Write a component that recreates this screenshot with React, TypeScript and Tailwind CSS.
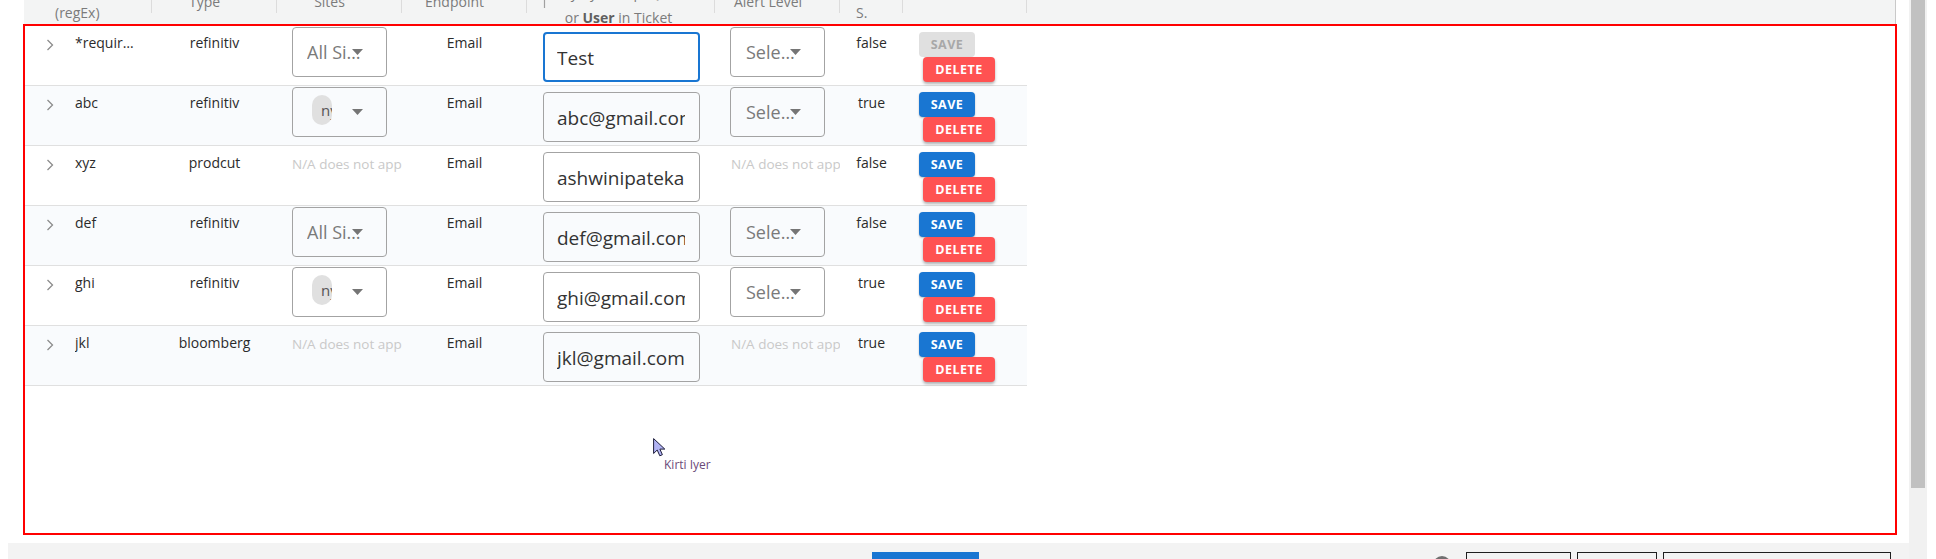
import React from 'react'

type Sites = 'all' | 'chip' | 'na'

type Rule = {
  name: string
  type: string
  sites: Sites
  ticket: string
  alert: boolean
  status: string
  editing?: boolean
}

const rules: Rule[] = [
  { name: '*required field', type: 'refinitiv', sites: 'all', ticket: 'Test', alert: true, status: 'false', editing: true },
  { name: 'abc', type: 'refinitiv', sites: 'chip', ticket: 'abc@gmail.com', alert: true, status: 'true' },
  { name: 'xyz', type: 'prodcut', sites: 'na', ticket: 'ashwinipatekar@lseg.com', alert: false, status: 'false' },
  { name: 'def', type: 'refinitiv', sites: 'all', ticket: 'def@gmail.com', alert: true, status: 'false' },
  { name: 'ghi', type: 'refinitiv', sites: 'chip', ticket: 'ghi@gmail.com', alert: true, status: 'true' },
  { name: 'jkl', type: 'bloomberg', sites: 'na', ticket: 'jkl@gmail.com', alert: false, status: 'true' },
]

function Chevron() {
  return (
    <svg width="8" height="12" viewBox="0 0 8 12" fill="none">
      <path d="M1.5 1 L6.5 6 L1.5 11" stroke="#8c8c8c" strokeWidth="1.3" />
    </svg>
  )
}

function SelectBox({ children }: { children: React.ReactNode }) {
  return (
    <div className="relative h-[50px] w-[95px] rounded-[4px] border border-[#a3a3a3]">
      {children}
      {/* dropdown caret */}
      <svg className="absolute left-[59px] top-[21px]" width="11" height="6" viewBox="0 0 11 6">
        <path d="M0 0 H11 L5.5 6 Z" fill="#757575" />
      </svg>
    </div>
  )
}

function NotApplicable() {
  return (
    <div className="overflow-hidden whitespace-nowrap pt-[7px] text-[13.5px] leading-[20px] text-[#c9c9c9]">
      N/A does not apply
    </div>
  )
}

function RuleRow({ rule, index }: { rule: Rule; index: number }) {
  return (
    <div className={`flex h-[60px] border-b border-[#e0e0e0] text-[14px] leading-[20px] text-[#2b2b2b] ${index % 2 ? 'bg-[#f9fbfd]' : 'bg-white'}`}>
      {/* expand + name */}
      <div className="flex w-[128px] shrink-0 items-start pt-[7px]">
        <div className="ml-[22px] mt-[6px]">
          <Chevron />
        </div>
        <span className="ml-[21px] block w-[60px] truncate">{rule.name}</span>
      </div>

      <div className="w-[125px] shrink-0 pt-[7px] text-center">{rule.type}</div>

      {/* sites */}
      <div className="w-[125px] shrink-0 overflow-hidden pl-[15px] pt-[1px]">
        {rule.sites === 'all' && (
          <SelectBox>
            <div className="flex h-full items-center pl-[14px]">
              <span className="block w-[56px] truncate text-[18px] leading-[24px] text-[#7a7a7a]">All Sites</span>
            </div>
          </SelectBox>
        )}
        {rule.sites === 'chip' && (
          <SelectBox>
            <div className="pl-[19px] pt-[7px]">
              <div className="h-[30px] w-[20px] overflow-hidden whitespace-nowrap rounded-full bg-[#e0e0e0] pl-[9px] text-[15px] leading-[30px] text-[#555]">
                ny
              </div>
            </div>
          </SelectBox>
        )}
        {rule.sites === 'na' && <NotApplicable />}
      </div>

      <div className="w-[125px] shrink-0 pt-[7px] text-center">Email</div>

      {/* ticket user */}
      <div className="w-[188px] shrink-0 pl-[16px] pt-[6px]">
        <div
          className={`flex h-[50px] w-[157px] items-center rounded-[4px] ${
            rule.editing ? 'border-2 border-[#1976d2] pl-[12px] pr-[13px]' : 'border border-[#a3a3a3] pl-[13px] pr-[14px]'
          }`}
        >
          <div className="min-w-0 flex-1 overflow-hidden whitespace-nowrap pt-[3px] text-[19px] leading-[25px] text-[#333]">
            {rule.ticket}
          </div>
        </div>
      </div>

      {/* alert level */}
      <div className="w-[125px] shrink-0 overflow-hidden pl-[15px] pt-[1px]">
        {rule.alert ? (
          <SelectBox>
            <div className="flex h-full items-center pl-[15px]">
              <span className="block w-[50px] truncate text-[18px] leading-[24px] text-[#7a7a7a]">Select Alert Level</span>
            </div>
          </SelectBox>
        ) : (
          <div className="pl-[1px]">
            <NotApplicable />
          </div>
        )}
      </div>

      <div className="w-[63px] shrink-0 pt-[7px] text-center">{rule.status}</div>

      {/* actions */}
      <div className="flex w-[124px] shrink-0 flex-col items-start pl-[16px] pt-[6px] text-[12.5px] font-bold leading-[25px] tracking-[0.04em]">
        {rule.editing ? (
          <button className="h-[25px] w-[56px] rounded-[4px] bg-[#e0e0e0] text-[#a8a8a8]">SAVE</button>
        ) : (
          <button className="h-[25px] w-[56px] rounded-[4px] bg-[#1976d2] text-white shadow-[0_1px_2px_rgba(0,0,0,0.25)]">SAVE</button>
        )}
        <button className="ml-[4px] h-[25px] w-[72px] rounded-[4px] bg-[#ff5252] text-white shadow-[0_2px_3px_rgba(0,0,0,0.3)]">
          DELETE
        </button>
      </div>
    </div>
  )
}

function Divider() {
  return <div className="h-[13px] w-px shrink-0 bg-[#dcdcdc]" />
}

function HeaderRow() {
  return (
    <div className="flex h-[26px] w-[1872px] overflow-hidden border-r border-[#c9c9c9] bg-[#f3f4f4] text-[14px] leading-[20px] text-[#7b7b7b]">
      <div className="flex w-[128px] shrink-0">
        <div className="-mt-[17px] min-w-0 flex-1 pl-[31px]">
          <div>&nbsp;</div>
          <div>(regEx)</div>
        </div>
        <Divider />
      </div>
      <div className="flex w-[125px] shrink-0">
        <div className="-mt-[8px] min-w-0 flex-1 pr-[19px] text-center">Type</div>
        <Divider />
      </div>
      <div className="flex w-[125px] shrink-0">
        <div className="-mt-[8px] min-w-0 flex-1 pr-[19px] text-center">Sites</div>
        <Divider />
      </div>
      <div className="flex w-[125px] shrink-0">
        <div className="-mt-[8px] min-w-0 flex-1 pr-[19px] text-center">Endpoint</div>
        <Divider />
      </div>
      <div className="flex w-[188px] shrink-0">
        <div className="-mt-[17px] min-w-0 flex-1 whitespace-nowrap pr-[4px] text-center">
          <div className="flex items-start justify-center gap-[5px]">
            <svg className="mt-[7px]" width="9" height="18" viewBox="0 0 9 18" fill="none">
              <path d="M4.5 18 V2 M0.8 5.5 L4.5 1.8 L8.2 5.5" stroke="#a0a0a0" strokeWidth="1.2" />
            </svg>
            <span>Key by Group, Queue,</span>
          </div>
          <div>
            or <b className="font-bold text-[#5f5f5f]">User</b> in Ticket
          </div>
        </div>
        <Divider />
      </div>
      <div className="flex w-[125px] shrink-0">
        <div className="-mt-[8px] min-w-0 flex-1 pr-[18px] text-center">Alert Level</div>
        <Divider />
      </div>
      <div className="flex w-[63px] shrink-0">
        <div className="-mt-[17px] min-w-0 flex-1 pl-[16px]">
          <div>&nbsp;</div>
          <div>S.</div>
        </div>
        <Divider />
      </div>
      <div className="flex w-[124px] shrink-0">
        <div className="min-w-0 flex-1" />
        <Divider />
      </div>
      <div className="flex-1" />
    </div>
  )
}

export default function App() {
  return (
    <div className="relative flex h-[559px] w-[1936px] overflow-hidden bg-white font-['Open_Sans','Noto_Sans',sans-serif]">
      <div className="flex w-[1909px] shrink-0 flex-col">
        <div className="h-[543px] pl-[24px]">
          <HeaderRow />
          <div className="w-[1003px]">
            {rules.map((r, i) => (
              <RuleRow key={r.name} rule={r} index={i} />
            ))}
          </div>
        </div>

        {/* footer bar (mostly below the fold) */}
        <div className="ml-[8px] flex h-[16px] w-[1901px] items-start overflow-hidden bg-[#f3f3f3]">
          <div className="ml-[864px] mt-[9px] h-[30px] w-[107px] shrink-0 bg-[#1976d2]" />
          <div className="ml-[454px] mt-[13px] h-[18px] w-[18px] shrink-0 rounded-full bg-[#707070]" />
          <div className="ml-[15px] mt-[9px] h-[32px] w-[105px] shrink-0 border border-[#1f1f1f]" />
          <div className="ml-[6px] mt-[9px] h-[32px] w-[80px] shrink-0 border border-[#1f1f1f]" />
          <div className="ml-[6px] mt-[9px] h-[32px] w-[228px] shrink-0 border border-[#1f1f1f]" />
        </div>
      </div>

      {/* scrollbar */}
      <div className="w-[18px] shrink-0 bg-[#f1f1f1]">
        <div className="mx-[2px] h-[488px] bg-[#c1c1c1]" />
      </div>

      {/* red annotation frame */}
      <div className="pointer-events-none absolute left-[23px] top-[24px] h-[511px] w-[1874px] border-2 border-[#ff0000]" />

      {/* mouse cursor + name label */}
      <svg className="absolute left-[653px] top-[438px]" width="13" height="19" viewBox="0 0 13 19">
        <path d="M0.6 0.6 V15.5 L4.2 12 L6.8 17.8 L9.4 16.7 L6.9 11.1 L11.8 11.1 Z" fill="#b2b4f4" stroke="#1e1e3c" strokeWidth="1" />
      </svg>
      <div className="absolute left-[664px] top-[459px] text-[12px] leading-none text-[#6b4a78]">Kirti Iyer</div>
    </div>
  )
}
